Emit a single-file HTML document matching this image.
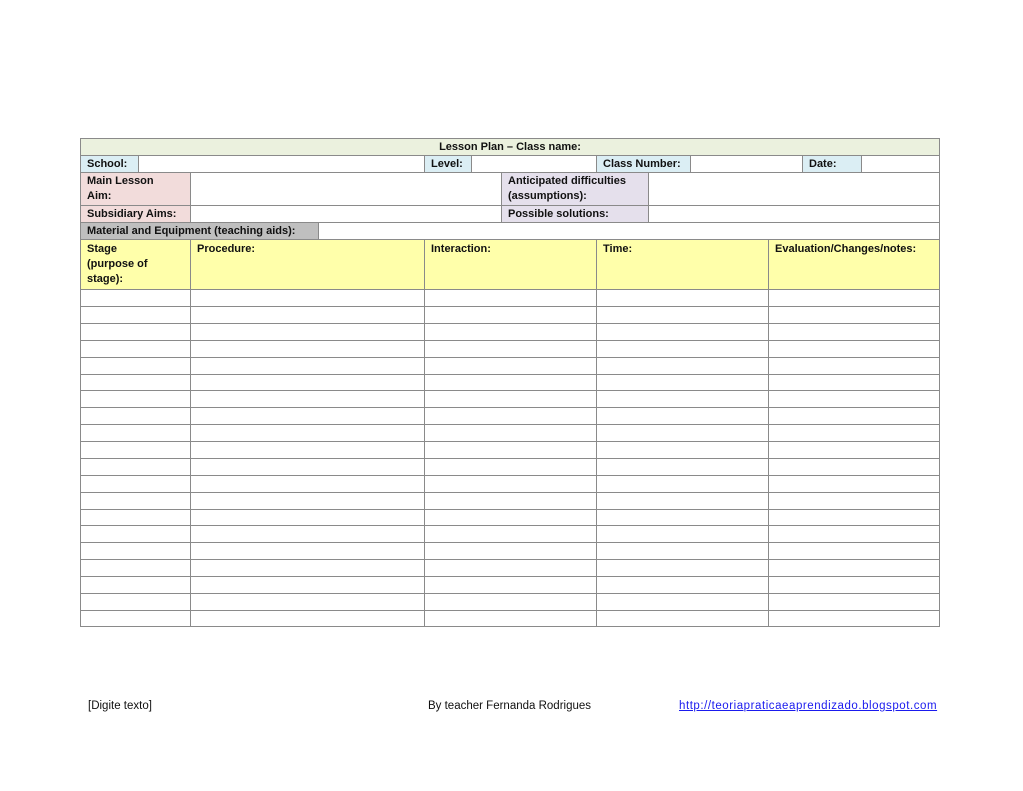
<!DOCTYPE html>
<html><head><meta charset="utf-8"><style>
body{margin:0;width:1023px;height:791px;background:#fff;position:relative;font-family:"Liberation Sans",sans-serif;overflow:hidden}
.c{position:absolute;box-sizing:border-box;border:1px solid #8a8a8a;font-size:11px;font-weight:bold;color:#111;padding:1px 6px;line-height:15px;overflow:hidden;white-space:nowrap}
.f{position:absolute;font-size:11.5px;color:#111;top:700px}
</style></head><body>
<div class="c" style="left:80px;top:138px;width:860px;height:18px;background:#ebf1de;text-align:center">Lesson Plan – Class name:</div>

<div class="c" style="left:80px;top:155px;width:59px;height:18px;background:#dbeef4">School:</div>
<div class="c" style="left:138px;top:155px;width:287px;height:18px"></div>
<div class="c" style="left:424px;top:155px;width:48px;height:18px;background:#dbeef4">Level:</div>
<div class="c" style="left:471px;top:155px;width:126px;height:18px"></div>
<div class="c" style="left:596px;top:155px;width:95px;height:18px;background:#dbeef4">Class Number:</div>
<div class="c" style="left:690px;top:155px;width:113px;height:18px"></div>
<div class="c" style="left:802px;top:155px;width:60px;height:18px;background:#dbeef4">Date:</div>
<div class="c" style="left:861px;top:155px;width:79px;height:18px"></div>

<div class="c" style="left:80px;top:172px;width:111px;height:34px;background:#f2dcdb;white-space:normal">Main Lesson<br>Aim:</div>
<div class="c" style="left:190px;top:172px;width:312px;height:34px"></div>
<div class="c" style="left:501px;top:172px;width:148px;height:34px;background:#e5e0ec">Anticipated difficulties<br>(assumptions):</div>
<div class="c" style="left:648px;top:172px;width:292px;height:34px"></div>

<div class="c" style="left:80px;top:205px;width:111px;height:18px;background:#f2dcdb">Subsidiary Aims:</div>
<div class="c" style="left:190px;top:205px;width:312px;height:18px"></div>
<div class="c" style="left:501px;top:205px;width:148px;height:18px;background:#e5e0ec">Possible solutions:</div>
<div class="c" style="left:648px;top:205px;width:292px;height:18px"></div>

<div class="c" style="left:80px;top:222px;width:239px;height:18px;background:#bfbfbf">Material and Equipment (teaching aids):</div>
<div class="c" style="left:318px;top:222px;width:622px;height:18px"></div>

<div class="c" style="left:80px;top:239px;width:111px;height:51px;background:#ffffaa;padding-top:2px">Stage<br>(purpose of<br>stage):</div>
<div class="c" style="left:190px;top:239px;width:235px;height:51px;background:#ffffaa;padding-top:2px">Procedure:</div>
<div class="c" style="left:424px;top:239px;width:173px;height:51px;background:#ffffaa;padding-top:2px">Interaction:</div>
<div class="c" style="left:596px;top:239px;width:173px;height:51px;background:#ffffaa;padding-top:2px">Time:</div>
<div class="c" style="left:768px;top:239px;width:172px;height:51px;background:#ffffaa;padding-top:2px">Evaluation/Changes/notes:</div>

<svg style="position:absolute;left:0;top:0" width="1023" height="791">
<g stroke="#8a8a8a" stroke-width="1" fill="none" shape-rendering="crispEdges">
<rect x="80.5" y="289.5" width="859" height="337"/>
<line x1="190.5" y1="289" x2="190.5" y2="627"/>
<line x1="424.5" y1="289" x2="424.5" y2="627"/>
<line x1="596.5" y1="289" x2="596.5" y2="627"/>
<line x1="768.5" y1="289" x2="768.5" y2="627"/>
<line x1="80" y1="306.5" x2="940" y2="306.5"/>
<line x1="80" y1="323.5" x2="940" y2="323.5"/>
<line x1="80" y1="340.5" x2="940" y2="340.5"/>
<line x1="80" y1="357.5" x2="940" y2="357.5"/>
<line x1="80" y1="374.5" x2="940" y2="374.5"/>
<line x1="80" y1="390.5" x2="940" y2="390.5"/>
<line x1="80" y1="407.5" x2="940" y2="407.5"/>
<line x1="80" y1="424.5" x2="940" y2="424.5"/>
<line x1="80" y1="441.5" x2="940" y2="441.5"/>
<line x1="80" y1="458.5" x2="940" y2="458.5"/>
<line x1="80" y1="475.5" x2="940" y2="475.5"/>
<line x1="80" y1="492.5" x2="940" y2="492.5"/>
<line x1="80" y1="509.5" x2="940" y2="509.5"/>
<line x1="80" y1="525.5" x2="940" y2="525.5"/>
<line x1="80" y1="542.5" x2="940" y2="542.5"/>
<line x1="80" y1="559.5" x2="940" y2="559.5"/>
<line x1="80" y1="576.5" x2="940" y2="576.5"/>
<line x1="80" y1="593.5" x2="940" y2="593.5"/>
<line x1="80" y1="610.5" x2="940" y2="610.5"/>
</g></svg>

<div class="f" style="left:88px">[Digite texto]</div>
<div class="f" style="left:428px">By teacher Fernanda Rodrigues</div>
<div class="f" style="left:679px;color:#1a1aee;text-decoration:underline;letter-spacing:0.55px">http://teoriapraticaeaprendizado.blogspot.com</div>
</body></html>
